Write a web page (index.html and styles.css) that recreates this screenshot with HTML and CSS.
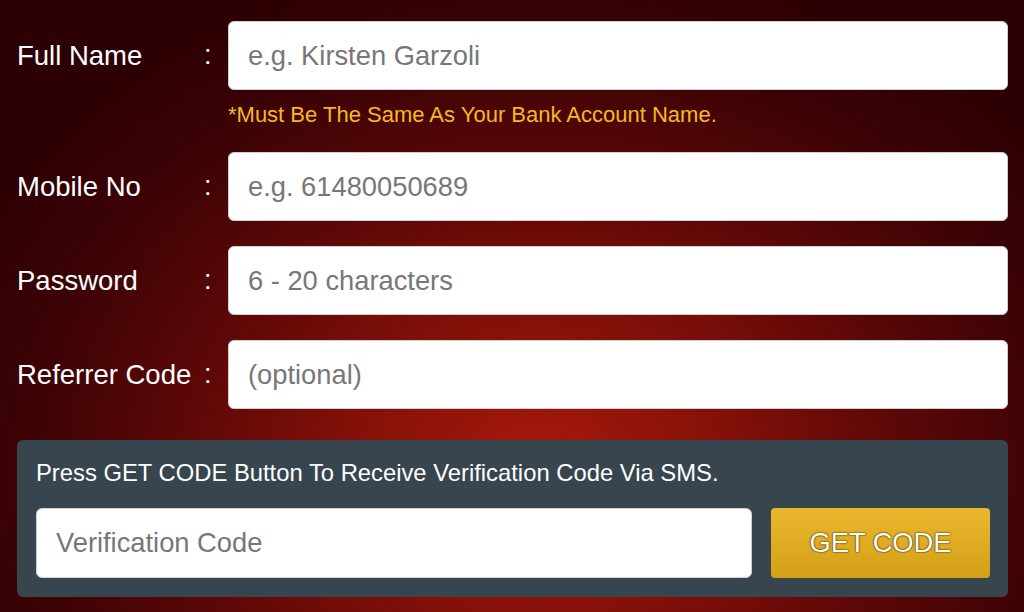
FILE: index.html
```html
<!DOCTYPE html>
<html>

<head>
    <title>Register</title>
    <meta charset="utf-8">
    <link rel="stylesheet" href="styles.css">
</head>

<body>
    <form class="regForm" autocomplete="off">
        <div class="fieldGroup">
            <div class="fieldRow">
                <label class="fieldLabel" for="full-name">Full Name</label>
                <span class="fieldColon">:</span>
                <input class="fieldInput" type="text" id="full-name" placeholder="e.g. Kirsten Garzoli" />
            </div>
            <div class="fieldHint">*Must Be The Same As Your Bank Account Name.</div>
        </div>
        <div class="fieldRow">
            <label class="fieldLabel" for="mobile-no">Mobile No</label>
            <span class="fieldColon">:</span>
            <input class="fieldInput" type="text" id="mobile-no" placeholder="e.g. 61480050689" />
        </div>
        <div class="fieldRow">
            <label class="fieldLabel" for="password">Password</label>
            <span class="fieldColon">:</span>
            <input class="fieldInput" type="password" id="password" placeholder="6 - 20 characters" />
        </div>
        <div class="fieldRow">
            <label class="fieldLabel" for="referrer">Referrer Code</label>
            <span class="fieldColon">:</span>
            <input class="fieldInput" type="text" id="referrer" placeholder="(optional)" />
        </div>

        <div class="smsPanel">
            <div class="smsInfo">Press GET CODE Button To Receive Verification Code Via SMS.</div>
            <div class="smsRow">
                <input class="fieldInput smsInput" type="text" id="sms-code" placeholder="Verification Code" />
                <button type="button" class="getCodeBtn">GET CODE</button>
            </div>
        </div>
    </form>
</body>

</html>
```

FILE: styles.css
```css
html,
body {
    height: 100%;
}

body {
    margin: 0;
    font-family: "Liberation Sans", Arial, sans-serif;
    color: #fff;
    background: radial-gradient(ellipse 640px 520px at 540px 470px, #a8190b 0%, #8a1209 25%, #5e0807 55%, #3d0305 80%, #2c0004 100%);
    background-color: #2c0004;
}

.regForm {
    display: flex;
    flex-direction: column;
    gap: 25px;
    padding: 21px 16px 0 17px;
}

.fieldRow {
    display: flex;
    align-items: center;
}

.fieldLabel {
    width: 187px;
    font-size: 27.5px;
    white-space: nowrap;
}

.fieldColon {
    width: 8px;
    margin-right: 16px;
    font-size: 27px;
}

.fieldInput {
    flex: 1;
    min-width: 0;
    height: 69px;
    box-sizing: border-box;
    padding: 0 19px;
    border: 1px solid #cfcfcf;
    border-radius: 6px;
    background: #fff;
    font-family: inherit;
    font-size: 27.3px;
    color: #333;
    outline: none;
}

.fieldInput::placeholder {
    color: #777;
}

.fieldHint {
    margin: 12px 0 0 211px;
    line-height: 25px;
    font-size: 22px;
    color: #f7b91c;
}

.smsPanel {
    margin-top: 6px;
    padding: 19px 18px 19px 19px;
    background: #37464e;
    border-radius: 6px;
}

.smsInfo {
    font-size: 23.8px;
    line-height: 28px;
}

.smsRow {
    display: flex;
    gap: 19px;
    margin-top: 21px;
}

.smsInput {
    height: 70px;
}

.getCodeBtn {
    width: 219px;
    height: 70px;
    border: none;
    border-radius: 4px;
    background: linear-gradient(#eab82e, #d39f16);
    font-family: inherit;
    font-size: 27.3px;
    color: #fff;
    text-shadow: 0 0 1px #5a3c00, 0 0 1px #5a3c00, 0 0 2px #5a3c00;
    cursor: pointer;
}
```
